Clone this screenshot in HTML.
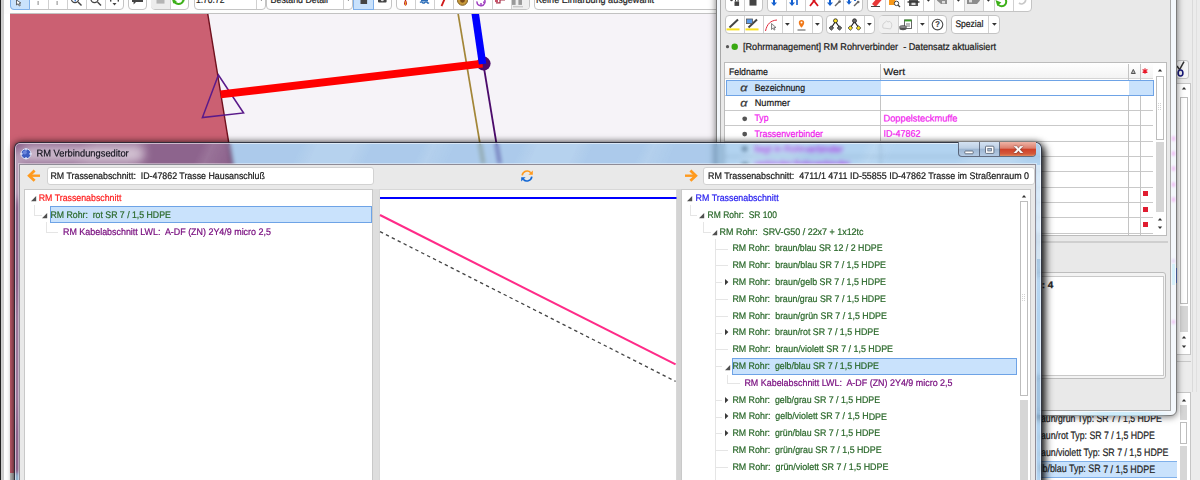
<!DOCTYPE html>
<html lang="de"><head><meta charset="utf-8"><title>RM Verbindungseditor</title>
<style>
html,body{margin:0;padding:0;background:#fff;}
#root{position:relative;width:1200px;height:480px;overflow:hidden;background:#fff;font-family:"Liberation Sans",sans-serif;}
.b{position:absolute;box-sizing:border-box;}
.t{position:absolute;left:0;top:0;white-space:pre;transform-origin:0 50%;-webkit-text-stroke:.22px currentColor;}
svg{position:absolute;overflow:visible;}
.g{position:absolute;box-sizing:border-box;background:#fff;border:1px solid #c4c4c4;border-radius:4px;}
.s{position:absolute;top:0;bottom:0;width:1px;background:#d0d0d0;}

</style></head><body>
<div id="root">
<div class="b" style="left:0px;top:0px;width:1px;height:480px;background:#222"></div>
<div class="b" style="left:1px;top:0px;width:2.5px;height:480px;background:#cdcdcd"></div>
<div class="b" style="left:3.5px;top:0px;width:714px;height:14px;background:#fdfdfd"></div>
<div class="b" style="left:9.5px;top:13px;width:706px;height:1px;background:#c2c2c2"></div>
<div class="b" style="left:10px;top:14px;width:705.5px;height:461px;background:#f6f3f8;overflow:hidden"></div>
<svg style="overflow:hidden;left:10px;top:14px" width="706" height="461" viewBox="0 1 706 461">
<polygon points="0,0 197.6,0 272.6,460 0,460" fill="#cb6072"/>
<line x1="197.6" y1="0" x2="272.6" y2="460" stroke="#70101e" stroke-width="1.4"/>
<line x1="448" y1="0" x2="473.4" y2="151" stroke="#a38638" stroke-width="1.7"/>
<line x1="474" y1="55" x2="489.8" y2="151" stroke="#4b0a6b" stroke-width="1.8"/>
<circle cx="473.6" cy="50.6" r="7" fill="#4b0a6b"/>
<polygon points="208.4,62 192.4,104.6 233.6,100" fill="none" stroke="#5a1a8a" stroke-width="1.5"/>
<line x1="210.6" y1="81.4" x2="472.5" y2="50.6" stroke="#ff0000" stroke-width="8"/>
<line x1="465" y1="-1" x2="472.6" y2="51" stroke="#0000ff" stroke-width="7.5"/>
</svg>
<div class="b" style="left:10px;top:473px;width:10px;height:7px;background:#c8c8c8"></div>
<div class="g" style="left:9.5px;top:-12px;width:114.5px;height:22px;border-radius:4px"><div class="b" style="left:-1.0px;top:-1px;width:20.0px;height:22px;background:#c9e2fc;border:1px solid #7fb0ea;border-radius:0 0 0 4px;"></div><div class="s" style="left:37.0px"></div><div class="s" style="left:56.0px"></div><div class="s" style="left:75.0px"></div><div class="s" style="left:94.5px"></div></div>
<div class="g" style="left:128px;top:-12px;width:19px;height:22px;border-radius:4px"></div>
<div class="g" style="left:151px;top:-12px;width:38px;height:22px;border-radius:4px"><div class="b" style="left:-1px;top:0;width:19px;height:20px;background:#ececec;border-radius:0 0 0 3px;"></div><div class="s" style="left:18px"></div></div>
<div class="g" style="left:193.5px;top:-12px;width:72.5px;height:22px;border-radius:4px"><div class="s" style="left:61.1px"></div></div>
<div class="g" style="left:266px;top:-12px;width:87px;height:22px;border-radius:4px"><div class="s" style="left:76px"></div></div>
<div class="g" style="left:353px;top:-12px;width:38.5px;height:22px;border-radius:4px"><div class="b" style="left:-1px;top:-1px;width:21px;height:22px;background:#c9e2fc;border:1px solid #7fb0ea;"></div></div>
<div class="g" style="left:396px;top:-12px;width:133.5px;height:22px;border-radius:4px"><div class="b" style="left:114px;top:0;width:17.5px;height:20px;background:#efefef;border-radius:0 0 3px 0"></div><div class="s" style="left:18px"></div><div class="s" style="left:37px"></div><div class="s" style="left:56px"></div><div class="s" style="left:75.5px"></div><div class="s" style="left:95px"></div><div class="s" style="left:114px"></div></div>
<div class="g" style="left:533.75px;top:-12px;width:201.25px;height:22px;border-radius:4px"></div>
<span class="t" style="font-size:10.5px;line-height:14px;color:#222;transform:translate(196px,-7.99px) rotate(.03deg) scaleX(0.810);">1:70.72</span>
<span class="t" style="font-size:10.5px;line-height:14px;color:#222;transform:translate(270.6px,-7.99px) rotate(.03deg) scaleX(0.840);">Bestand Detail</span>
<span class="t" style="font-size:10.5px;line-height:14px;color:#222;transform:translate(536px,-7.99px) rotate(.03deg) scaleX(0.864);">Keine Einfärbung ausgewählt</span>
<svg style="left:258.6px;top:-2.4px" width="4.8" height="2.8" viewBox="0 0 4.8 2.8"><path d="M0 0H4.8L2.4 2.8Z" fill="#333"/></svg>
<svg style="left:346.1px;top:-2.4px" width="4.8" height="2.8" viewBox="0 0 4.8 2.8"><path d="M0 0H4.8L2.4 2.8Z" fill="#333"/></svg>
<svg style="left:0px;top:0px" width="540" height="10" viewBox="0 0 540 10">
<path d="M16.5 0l0 5 1.5-1.2 1.3 2.2 1-.6-1.2-2.2 1.8-.2z" fill="#fff" stroke="#444" stroke-width=".8"/>
<rect x="37.6" y="1" width="1" height="4" fill="#888"/><rect x="56.6" y="1" width="1" height="4" fill="#888"/>
<circle cx="75" cy="-1" r="3.6" fill="none" stroke="#444" stroke-width="1.2"/><line x1="78" y1="2" x2="81.5" y2="5.5" stroke="#444" stroke-width="1.4"/>
<rect x="74.6" y="-1" width="1.2" height="2.4" fill="#1560d0"/>
<circle cx="94.5" cy="-1" r="3.6" fill="none" stroke="#444" stroke-width="1.2"/><line x1="97.5" y1="2" x2="101" y2="5.5" stroke="#444" stroke-width="1.4"/>
<path d="M112.5 3h4l-2 2.6z" fill="#444"/><rect x="110" y="0" width="1.4" height="1.6" fill="#444"/><rect x="117.6" y="0" width="1.4" height="1.6" fill="#444"/>
<path d="M132 -2h11v4h-7l-2.4 2.4v-2.4h-1.6z" fill="#444"/>
<rect x="156.5" y="-2" width="8" height="5.6" fill="#b4b4b4"/>
<path d="M173.6 0.5a5.2 5.2 0 0 0 9.6 .6" fill="none" stroke="#3cb018" stroke-width="2"/><path d="M172 -1l1.2 4.6 3.8-2.4z" fill="#3cb018"/><path d="M185.4 -2.2l-1.4 4.2-3.2-2.6z" fill="#3cb018"/>
<rect x="360.5" y="-2" width="6.6" height="6" fill="#444"/>
<rect x="378" y="-2" width="8.6" height="4.4" rx="1" fill="#444"/><circle cx="382.3" cy="-0.2" r="1.5" fill="#ddd"/>
<g transform="translate(0,1.3)"><path d="M405.5 -2c-2 3-1.6 6.2 0 6.400c1.600-.2 2-3.400 0-6.400z" fill="#c01818"/><path d="M405.500 0v4" stroke="#e8a020" stroke-width="1"/>
<path d="M420 1.200q1.200-1.400 2.400 0t2.400 0 2.400 0 1.600 0" fill="none" stroke="#2a6cb8" stroke-width="1.300"/><rect x="421" y="-2" width="7" height="2.200" fill="#2a6cb8"/>
<path d="M441.500 4.800l3-6.800" stroke="#d01818" stroke-width="1.800"/>
<circle cx="462.500" cy="-1" r="5" fill="#c89a3a" stroke="#7a5a20" stroke-width="1"/><circle cx="462.500" cy="-1" r="2.400" fill="#7a4a18"/>
<path d="M477 0a4 4 0 1 0 6-3" fill="none" stroke="#a040c0" stroke-width="1.400"/><circle cx="484" cy="1" r="1" fill="#a040c0"/><circle cx="481" cy="2.600" r="1" fill="#a040c0"/>
<path d="M496 1.500h4v-3h5" fill="none" stroke="#a83048" stroke-width="1.200"/><rect x="495" y="-1.600" width="3" height="2.400" fill="#c85068"/>
<rect x="512" y="-3" width="3.600" height="6.600" fill="#9a9a9a"/><rect x="518.400" y="-3" width="3.600" height="6.600" fill="#9a9a9a"/><path d="M513 5.500h10" stroke="#bbb" stroke-width="1"/>
</g>
</svg>
<div class="b" style="left:1171px;top:0px;width:29px;height:480px;background:#ececec"></div>
<div class="b" style="left:1176px;top:59.5px;width:12.5px;height:19px;border:1px solid #c2c2c2;border-radius:3px;background:#f6f6f6"></div>
<svg style="left:1176px;top:60px" width="12" height="18" viewBox="0 0 12 18"><path d="M1 6l2.600 3.600 4.400-8" fill="none" stroke="#333" stroke-width="1.500"/><ellipse cx="4.500" cy="13" rx="2.400" ry="3" fill="none" stroke="#1a1a7a" stroke-width="1.600"/></svg>
<div class="b" style="left:1176px;top:83px;width:14.5px;height:271.5px;border:1px solid #c6c6c6;background:#fff"></div>
<div class="b" style="left:1180px;top:96.5px;width:7.5px;height:207px;border:1px solid #bdbdbd;background:#fff"></div>
<div class="b" style="left:1180px;top:306px;width:7.5px;height:26px;background:#d6d6d6"></div>
<svg style="left:1181px;top:86px" width="6" height="4" viewBox="0 0 6 4"><path d="M0.8 3.4L3 1L5.2 3.4Z" fill="#333"/></svg>
<svg style="left:1180.6px;top:335px" width="6" height="4" viewBox="0 0 6 4"><path d="M0.8 3.4L3 1L5.2 3.4Z" fill="#333"/></svg>
<svg style="left:1180.6px;top:345px" width="6" height="4" viewBox="0 0 6 4"><path d="M0.8 0.6L3 3L5.2 0.6Z" fill="#333"/></svg>
<div class="b" style="left:1176px;top:361px;width:15px;height:1px;background:#c8c8c8"></div>
<div class="b" style="left:1192px;top:0px;width:1px;height:392px;background:#dadada"></div>
<div class="b" style="left:1196px;top:0px;width:1px;height:392px;background:#e0e0e0"></div>
<div class="b" style="left:1030px;top:392px;width:161px;height:100px;background:#fff;border:1px solid #c6c6c6"></div>
<div class="b" style="left:1040px;top:460.75px;width:137px;height:17.2px;background:#c9e2fc;border-top:1px solid #7fb0ea;border-bottom:1px solid #7fb0ea"></div>
<span class="t" style="font-size:10.8px;line-height:14px;color:#222;transform:translate(1041px,411.02px) rotate(.03deg) scaleX(0.806);">aun/grün Typ: SR 7 / 1,5 HDPE</span>
<span class="t" style="font-size:10.8px;line-height:14px;color:#222;transform:translate(1041px,428.22px) rotate(.03deg) scaleX(0.809);">aun/rot Typ: SR 7 / 1,5 HDPE</span>
<span class="t" style="font-size:10.8px;line-height:14px;color:#222;transform:translate(1041px,444.82px) rotate(.03deg) scaleX(0.815);">aun/violett Typ: SR 7 / 1,5 HDPE</span>
<span class="t" style="font-size:10.8px;line-height:14px;color:#222;transform:translate(1040.5px,461.47px) rotate(.03deg) scaleX(0.824);">lb/blau Typ: SR 7 / 1,5 HDPE</span>
<svg style="left:1180.5px;top:398px" width="6" height="4" viewBox="0 0 6 4"><path d="M0.8 3.4L3 1L5.2 3.4Z" fill="#333"/></svg>
<div class="b" style="left:1180px;top:405px;width:7px;height:14.5px;background:#d6d6d6"></div>
<div class="b" style="left:1180px;top:422px;width:7px;height:21.5px;border:1px solid #bdbdbd;background:#fff"></div>
<div class="b" style="left:1180px;top:446px;width:7px;height:34px;background:#d6d6d6"></div>
<div class="b" style="left:715.5px;top:-12px;width:461px;height:428.2px;background:#f4f8fc;border:1px solid #7d7d7d;border-radius:6px;box-shadow:0 1px 7px 0 rgba(0,0,0,.55)"></div>
<div class="b" style="left:720px;top:-12px;width:451px;height:422.9px;background:#e9e9e9;border:1px solid #a8a8a8;border-top:0"></div>
<div class="b" style="left:1060px;top:411.5px;width:110px;height:4px;background:linear-gradient(90deg,rgba(190,232,250,0),rgba(190,232,250,.7) 40%,rgba(190,232,250,.7) 75%,rgba(190,232,250,0));filter:blur(.6px)"></div>
<div class="g" style="left:724.5px;top:-10px;width:38.5px;height:21.5px;border-radius:4px"><div class="s" style="left:18.0px"></div></div>
<div class="g" style="left:766.7px;top:-10px;width:96.0px;height:21.5px;border-radius:4px"><div class="s" style="left:18.3px"></div><div class="s" style="left:37.3px"></div><div class="s" style="left:56.3px"></div><div class="s" style="left:75.3px"></div></div>
<div class="g" style="left:866.5px;top:-10px;width:165.5px;height:21.5px;border-radius:4px"><div class="b" style="left:66.5px;top:0;width:19px;height:19.5px;background:#f0f0f0"></div><div class="b" style="left:96.5px;top:0;width:19px;height:19.5px;background:#f0f0f0"></div><div class="s" style="left:17.5px"></div><div class="s" style="left:36.5px"></div><div class="s" style="left:55.5px"></div><div class="s" style="left:66.5px"></div><div class="s" style="left:85.5px"></div><div class="s" style="left:96.5px"></div><div class="s" style="left:115.5px"></div><div class="s" style="left:126.5px"></div><div class="s" style="left:145.5px"></div></div>
<div class="g" style="left:724.5px;top:14.5px;width:98.0px;height:19.9px;border-radius:4px"><div class="s" style="left:18.0px"></div><div class="s" style="left:37.0px"></div><div class="s" style="left:56.0px"></div><div class="s" style="left:67.0px"></div><div class="s" style="left:86.0px"></div></div>
<div class="g" style="left:826px;top:14.5px;width:49px;height:19.9px;border-radius:4px"><div class="s" style="left:18px"></div><div class="s" style="left:37px"></div></div>
<div class="g" style="left:879px;top:14.5px;width:68px;height:19.9px;border-radius:4px"><div class="b" style="left:-1px;top:0;width:19px;height:17.9px;background:#f0f0f0;border-radius:3px 0 0 3px;"></div><div class="s" style="left:18px"></div><div class="s" style="left:37px"></div><div class="s" style="left:48px"></div></div>
<div class="g" style="left:951px;top:14.5px;width:49px;height:19.9px;border-radius:4px"><div class="s" style="left:36px"></div></div>
<span class="t" style="font-size:9.6px;line-height:12px;color:#222;transform:translate(955.4px,18.30px) rotate(.03deg) scaleX(0.887);">Spezial</span>
<svg style="left:784.6px;top:23.1px" width="4.8" height="2.8" viewBox="0 0 4.8 2.8"><path d="M0 0H4.8L2.4 2.8Z" fill="#333"/></svg>
<svg style="left:814.6px;top:23.1px" width="4.8" height="2.8" viewBox="0 0 4.8 2.8"><path d="M0 0H4.8L2.4 2.8Z" fill="#333"/></svg>
<svg style="left:867.3000000000001px;top:23.1px" width="4.8" height="2.8" viewBox="0 0 4.8 2.8"><path d="M0 0H4.8L2.4 2.8Z" fill="#333"/></svg>
<svg style="left:920.2px;top:23.1px" width="4.8" height="2.8" viewBox="0 0 4.8 2.8"><path d="M0 0H4.8L2.4 2.8Z" fill="#333"/></svg>
<svg style="left:991.6px;top:23.1px" width="4.8" height="2.8" viewBox="0 0 4.8 2.8"><path d="M0 0H4.8L2.4 2.8Z" fill="#333"/></svg>
<svg style="left:926.1px;top:-1.2px" width="4.8" height="2.8" viewBox="0 0 4.8 2.8"><path d="M0 0H4.8L2.4 2.8Z" fill="#333"/></svg>
<svg style="left:956.1px;top:-1.2px" width="4.8" height="2.8" viewBox="0 0 4.8 2.8"><path d="M0 0H4.8L2.4 2.8Z" fill="#333"/></svg>
<svg style="left:986.1px;top:-1.2px" width="4.8" height="2.8" viewBox="0 0 4.8 2.8"><path d="M0 0H4.8L2.4 2.8Z" fill="#333"/></svg>
<svg style="left:716px;top:0px" width="330" height="12" viewBox="0 0 330 12">
<rect x="18.500" y="1.500" width="4.600" height="4.400" fill="#444"/><path d="M19.500 1.500v-2a1.300 1.300 0 0 1 2.600 0v2" fill="none" stroke="#444" stroke-width="1"/><circle cx="15.500" cy="0" r="1.300" fill="#444"/>
<rect x="33.500" y="0" width="7" height="5.600" fill="#444"/>
<path d="M58 -3v7" stroke="#1460d0" stroke-width="2"/><path d="M55 2.500h6l-3 3.500z" fill="#1460d0"/>
<path d="M76 -3v7" stroke="#1460d0" stroke-width="2"/><path d="M73 2.500h6l-3 3.500z" fill="#1460d0"/><path d="M81 5v-6h3" fill="none" stroke="#1460d0" stroke-width="1.600"/>
<path d="M94 6l7-9M102 6l-7-9" stroke="#d8141c" stroke-width="1.800" fill="none"/>
<path d="M114 -3v7" stroke="#1460d0" stroke-width="2"/><path d="M111 2.500h6l-3 3.500z" fill="#1460d0"/><path d="M119 6l4-4" stroke="#666" stroke-width="1.400"/><circle cx="123.600" cy="1.600" r="1.300" fill="#666"/>
<path d="M133 -3v6" stroke="#1460d0" stroke-width="2"/><path d="M130.200 1.500h5.600l-2.800 3.300z" fill="#1460d0"/><path d="M139 -3v4" stroke="#1460d0" stroke-width="1.800"/><path d="M138 6l4-4" stroke="#666" stroke-width="1.400"/><circle cx="142.200" cy="2" r="1.300" fill="#666"/>
<path d="M156 4l6-7 3.600 3-6 7z" fill="#e83838"/><path d="M155 6.500h9" stroke="#444" stroke-width="1"/>
<rect x="173" y="-2" width="6.500" height="7" fill="#f89818"/><circle cx="180.500" cy="3.400" r="2.200" fill="#fff" stroke="#444" stroke-width="1"/><path d="M182 5l2 2" stroke="#444" stroke-width="1.200"/>
<rect x="193" y="-3" width="9" height="9" fill="#555"/><rect x="195.500" y="2" width="4" height="3" fill="#ddd"/><path d="M191.500 2h12" stroke="#333" stroke-width="1.400"/>
<path d="M221 -3h10v7h-6l-4-3.500z" fill="#8c8c8c"/><rect x="226" y="1" width="3" height="2.400" fill="#ddd"/>
<path d="M251 -3h10l3 3.500-3 3.500h-10z" fill="#8c8c8c"/><rect x="253" y="0" width="3" height="2.400" fill="#ddd"/>
<path d="M282 4.500a4.600 4.600 0 1 0 5.600-7" fill="none" stroke="#3cb018" stroke-width="2"/><path d="M279.500 0l1.800 6 4-3.600z" fill="#3cb018"/>
<path d="M303 3a4 4 0 0 0 5-6.500" fill="none" stroke="#c8c8c8" stroke-width="1.800"/>
</svg>
<svg style="left:716px;top:15.7px" width="330" height="19" viewBox="0 0 330 19">
<path d="M13.500 11.500l8.500-8" stroke="#444" stroke-width="2"/><rect x="10.500" y="12.400" width="13" height="2" fill="#f8e020"/>
<path d="M32.500 11.500l8.500-8" stroke="#444" stroke-width="2"/><rect x="29.500" y="12.400" width="13" height="2" fill="#f8e020"/><rect x="30.500" y="3" width="6" height="4.600" fill="#5a9ae8" stroke="#555" stroke-width=".8"/>
<path d="M49.500 15c1.500-7 5-10.500 11.500-11" fill="none" stroke="#e02838" stroke-width="1"/><path d="M55.500 7.500v6l1.600-1.400 1 2 .9-.5-1-1.900 2-.2z" fill="#eee" stroke="#555" stroke-width=".7"/>
<path d="M85.500 4a2.700 2.700 0 0 1 2.700 2.700c0 2-2.700 5-2.700 5s-2.700-3-2.700-5a2.700 2.700 0 0 1 2.700-2.700z" fill="#f07818"/><circle cx="85.500" cy="6.600" r="1" fill="#fff"/><path d="M81.500 14h8" stroke="#555" stroke-width="1"/>
<path d="M119.500 5.500l-4 6M119.500 5.500l4 6" stroke="#222" stroke-width="1.200"/><circle cx="119.500" cy="4.800" r="2" fill="#f8e020" stroke="#222" stroke-width=".8"/><rect x="113.800" y="10.400" width="3.200" height="3.200" transform="rotate(45 115.400 12)" fill="#666" stroke="#222" stroke-width=".7"/><rect x="121.900" y="10.400" width="3.200" height="3.200" transform="rotate(45 123.500 12)" fill="#666" stroke="#222" stroke-width=".7"/>
<path d="M138.500 5.500l-4 6M138.500 5.500l4 6" stroke="#222" stroke-width="1.200"/><circle cx="138.500" cy="4.800" r="2" fill="#666" stroke="#222" stroke-width=".8"/><rect x="132.800" y="10.400" width="3.200" height="3.200" transform="rotate(45 134.400 12)" fill="#f8e020" stroke="#222" stroke-width=".7"/><rect x="140.900" y="10.400" width="3.200" height="3.200" transform="rotate(45 142.500 12)" fill="#f8e020" stroke="#222" stroke-width=".7"/>
<path d="M167 12c-1-3 .5-5 2-5.600l1.500-1.400 1.500 1 1.800-.6 1.400 1.500c1 1.600.6 4.300-.7 6z" fill="#f1f1f1" stroke="#d2d2d2" stroke-width="1"/>
<rect x="188.500" y="4" width="7" height="8.500" fill="#fff" stroke="#555" stroke-width=".9"/><rect x="188.500" y="3.600" width="7" height="1.800" fill="#3a9a28"/><path d="M190 8h4M190 10h4" stroke="#555" stroke-width=".8"/><ellipse cx="187" cy="12.600" rx="3.600" ry="1.600" fill="#555"/><ellipse cx="187" cy="11" rx="3.600" ry="1.600" fill="#888" stroke="#333" stroke-width=".5"/>
<circle cx="221.500" cy="8.600" r="5.300" fill="#fff" stroke="#4a4a4a" stroke-width="1.1"/>
</svg>
<span class="t" style="font-size:8.5px;line-height:11px;color:#4a4a4a;font-weight:bold;transform:translate(935.3px,19.22px) rotate(.03deg) scaleX(0.884);">?</span>
<svg style="left:716px;top:40px" width="30" height="14" viewBox="0 0 30 14"><circle cx="11.500" cy="6.700" r="1.600" fill="#555"/><circle cx="18.700" cy="6.700" r="3.200" fill="#38a810"/></svg>
<span class="t" style="font-size:9.8px;line-height:13px;color:#1a1a1a;transform:translate(743px,39.87px) rotate(.03deg) scaleX(0.931);">[Rohrmanagement] RM Rohrverbinder  - Datensatz aktualisiert</span>
<div class="b" style="left:724px;top:61.8px;width:443px;height:174.2px;background:#fff;border:1px solid #bcbcbc"></div>
<div class="b" style="left:725px;top:62.8px;width:428px;height:16.2px;background:linear-gradient(#ffffff,#f3f3f3);border-bottom:1px solid #d5d5d5"></div>
<span class="t" style="font-size:9.6px;line-height:12px;color:#1a1a1a;transform:translate(729px,65.90px) rotate(.03deg) scaleX(0.909);">Feldname</span>
<span class="t" style="font-size:9.6px;line-height:12px;color:#1a1a1a;transform:translate(883.5px,65.90px) rotate(.03deg) scaleX(1.071);">Wert</span>
<div class="b" style="left:725px;top:94.53px;width:428px;height:1px;background:#c9c9c9"></div>
<div class="b" style="left:725px;top:109.86px;width:428px;height:1px;background:#c9c9c9"></div>
<div class="b" style="left:725px;top:125.19px;width:428px;height:1px;background:#c9c9c9"></div>
<div class="b" style="left:725px;top:140.52px;width:428px;height:1px;background:#c9c9c9"></div>
<div class="b" style="left:725px;top:155.85px;width:428px;height:1px;background:#c9c9c9"></div>
<div class="b" style="left:725px;top:171.18px;width:428px;height:1px;background:#c9c9c9"></div>
<div class="b" style="left:725px;top:186.51px;width:428px;height:1px;background:#c9c9c9"></div>
<div class="b" style="left:725px;top:201.84px;width:428px;height:1px;background:#c9c9c9"></div>
<div class="b" style="left:725px;top:217.17px;width:428px;height:1px;background:#c9c9c9"></div>
<div class="b" style="left:725px;top:232.5px;width:428px;height:1px;background:#c9c9c9"></div>
<div class="b" style="left:880.0px;top:63.5px;width:1px;height:171.5px;background:#c4c4c4"></div>
<div class="b" style="left:1128.0px;top:63.5px;width:1px;height:171.5px;background:#c4c4c4"></div>
<div class="b" style="left:1140.0px;top:63.5px;width:1px;height:171.5px;background:#c4c4c4"></div>
<div class="b" style="left:725.5px;top:79.5px;width:428px;height:16px;background:#c9e2fc;border:1px solid #6ea3e6"></div>
<div class="b" style="left:881px;top:80.5px;width:247.5px;height:14px;background:#fff"></div>
<span class="t" style="font-size:10.5px;line-height:14px;color:#333;transform:translate(740.3px,80.21px) rotate(.03deg) scaleX(1.200);font-style:italic;">α</span>
<span class="t" style="font-size:9.6px;line-height:12px;color:#1a1a1a;transform:translate(754.7px,81.70px) rotate(.03deg) scaleX(0.907);">Bezeichnung</span>
<span class="t" style="font-size:10.5px;line-height:14px;color:#333;transform:translate(740.3px,95.51px) rotate(.03deg) scaleX(1.200);font-style:italic;">α</span>
<span class="t" style="font-size:9.6px;line-height:12px;color:#1a1a1a;transform:translate(754.7px,97.00px) rotate(.03deg) scaleX(0.960);">Nummer</span>
<svg style="left:742px;top:110.5px" width="8" height="32" viewBox="0 0 8 32"><circle cx="2.700" cy="7.800" r="2.400" fill="#555"/><circle cx="2.700" cy="23.100" r="2.400" fill="#555"/></svg>
<span class="t" style="font-size:9.6px;line-height:12px;color:#f31cf0;transform:translate(754.5px,112.40px) rotate(.03deg) scaleX(0.905);">Typ</span>
<span class="t" style="font-size:9.6px;line-height:12px;color:#f31cf0;transform:translate(754.5px,127.70px) rotate(.03deg) scaleX(0.922);">Trassenverbinder</span>
<span class="t" style="font-size:9.6px;line-height:12px;color:#f31cf0;transform:translate(883.5px,112.40px) rotate(.03deg) scaleX(0.966);">Doppelsteckmuffe</span>
<span class="t" style="font-size:9.6px;line-height:12px;color:#f31cf0;transform:translate(883.5px,127.70px) rotate(.03deg) scaleX(0.937);">ID-47862</span>
<span class="t" style="font-size:9.6px;line-height:12px;color:#f31cf0;transform:translate(754.5px,143.10px) rotate(.03deg) scaleX(0.971);">liegt in Rohrverbinder</span>
<span class="t" style="font-size:9.6px;line-height:12px;color:#f31cf0;transform:translate(754.5px,158.40px) rotate(.03deg) scaleX(0.928);">verbindet Rohrverbinder</span>
<svg style="left:742px;top:141.2px" width="12" height="32" viewBox="0 0 12 32"><circle cx="2.700" cy="7.800" r="2.400" fill="#555"/><rect x="0" y="22" width="6" height="3" fill="#555"/></svg>
<svg style="left:1131px;top:68.5px" width="5" height="5" viewBox="0 0 5 5"><path d="M2.300 .4L4.300 4.500H.3Z" fill="#bbb" stroke="#444" stroke-width=".9"/></svg>
<svg style="left:1142.3px;top:67.8px" width="6" height="6" viewBox="0 0 6 6"><path d="M3 .2v5.600M.6 1.500l4.800 3M.6 4.500l4.800-3" stroke="#e81828" stroke-width="1.100"/></svg>
<div class="b" style="left:1143.3px;top:191.38px;width:5px;height:5px;background:#e01c30"></div>
<div class="b" style="left:1143.3px;top:206.7px;width:5px;height:5px;background:#e01c30"></div>
<div class="b" style="left:1143.3px;top:222.03px;width:5px;height:5px;background:#e01c30"></div>
<svg style="left:1157px;top:67.5px" width="6" height="4" viewBox="0 0 6 4"><path d="M0.8 3.4L3 1L5.2 3.4Z" fill="#333"/></svg>
<div class="b" style="left:1156px;top:75.5px;width:7.5px;height:64px;border:1px solid #bdbdbd;background:#fff"></div>
<svg style="left:1157.5px;top:103px" width="5" height="9" viewBox="0 0 5 9"><path d="M0 .5h4M0 2.500h4M0 4.500h4M0 6.500h4" stroke="#c8c8c8" stroke-width=".8" stroke-dasharray="1 1"/></svg>
<div class="b" style="left:1156px;top:142px;width:7.5px;height:70px;background:#d6d6d6"></div>
<svg style="left:1157px;top:216.5px" width="6" height="4" viewBox="0 0 6 4"><path d="M0.8 3.4L3 1L5.2 3.4Z" fill="#333"/></svg>
<svg style="left:1157px;top:226px" width="6" height="4" viewBox="0 0 6 4"><path d="M0.8 0.6L3 3L5.2 0.6Z" fill="#333"/></svg>
<div class="b" style="left:721px;top:241px;width:447px;height:1.5px;background:#cfcfcf"></div>
<div class="b" style="left:724px;top:271.5px;width:442px;height:107.5px;border:1px solid #bdbdbd;border-radius:3px;background:#f3f3f3"></div>
<div class="b" style="left:728px;top:275.5px;width:435.5px;height:100px;border:1px solid #c9c9c9;background:#fff"></div>
<span class="t" style="font-size:10px;line-height:13px;color:#222;font-weight:bold;transform:translate(1041.7px,278.24px) rotate(.03deg) scaleX(0.994);">: 4</span>
<div class="b" style="left:14px;top:141.8px;width:1027.5px;height:360px;border-radius:6px 6px 0 0;box-shadow:3px 4px 9px 0 rgba(0,0,0,.85),0 0 7px 0 rgba(0,0,0,.6)"></div>
<div class="b" style="left:14px;top:141.8px;width:1027.5px;height:360px;border-radius:6px 6px 0 0;border:1px solid rgba(30,30,40,.85);backdrop-filter:blur(2.2px);-webkit-backdrop-filter:blur(2.2px);background:repeating-linear-gradient(115deg,rgba(255,255,255,0) 0,rgba(255,255,255,0) 60px,rgba(255,255,255,.13) 75px,rgba(255,255,255,.13) 110px,rgba(255,255,255,0) 125px,rgba(255,255,255,0) 170px,rgba(255,255,255,.1) 180px,rgba(255,255,255,0) 200px),rgba(0,108,206,.30);box-shadow:inset 0 0 0 1px rgba(255,255,255,.55)"></div>
<div class="b" style="left:15px;top:142.8px;width:1025.5px;height:340px;border-radius:5px 5px 0 0;overflow:hidden"><div class="b" style="left:6px;top:3px;width:124px;height:16px;background:rgba(255,255,255,.55);border-radius:8px;filter:blur(5px)"></div><div class="b" style="left:-8px;top:8px;width:16px;height:50px;background:rgba(255,255,255,.4);border-radius:8px;filter:blur(5px)"></div></div>
<svg style="left:20px;top:148px" width="12" height="12" viewBox="0 0 12 12"><circle cx="6" cy="5.800" r="5" fill="#3c5cc0" stroke="#dfe4f2" stroke-width="1"/><path d="M6 .3v2.200M6 9.100v2.200M.5 5.800h2.200M9.300 5.800h2.200" stroke="#eef" stroke-width="1.200"/><circle cx="4.800" cy="4.600" r="2" fill="#6a86dc"/></svg>
<span class="t" style="font-size:9.8px;line-height:13px;color:#14141e;transform:translate(36.5px,146.57px) rotate(.03deg) scaleX(0.951);">RM Verbindungseditor</span>
<div class="b" style="left:957.8px;top:141.8px;width:78px;height:15.2px;border-radius:0 0 4px 4px;border:1px solid rgba(60,70,90,.75);border-top:0;overflow:hidden;background:linear-gradient(#d4e2f2 0,#bccfe4 45%,#9db6d2 50%,#b4cbe4 100%)"></div>
<div class="b" style="left:999.5px;top:141.8px;width:36.3px;height:14.7px;border-radius:0 0 4px 0;background:linear-gradient(#eeb4a6 0,#dc7e6c 45%,#cf4028 50%,#d45a3c 85%,#e08a5c 100%)"></div>
<div class="b" style="left:979px;top:141.8px;width:1px;height:14.5px;background:rgba(60,70,90,.7)"></div>
<div class="b" style="left:999px;top:141.8px;width:1px;height:14.5px;background:rgba(60,70,90,.7)"></div>
<svg style="left:958px;top:143px" width="78" height="15" viewBox="0 0 78 15">
<rect x="6.800" y="8" width="8.400" height="2.800" rx=".8" fill="#fff" stroke="#5a6678" stroke-width=".9"/>
<rect x="27.500" y="3.200" width="8.400" height="7.200" rx=".8" fill="#fff" stroke="#5a6678" stroke-width=".9"/><rect x="29.800" y="5.400" width="3.800" height="2.600" fill="#a8bcd4" stroke="#5a6678" stroke-width=".7"/>
</svg>
<span class="t" style="font-size:13px;line-height:17px;color:#fff;font-weight:bold;transform:translate(1013.8px,140.07px) rotate(.03deg) scaleX(1.299);text-shadow:0 0 1.500px #4a2a2a,0 0 1px #4a2a2a;">x</span>
<div class="b" style="left:1036.5px;top:165px;width:4.2px;height:94px;background:rgba(255,255,255,.5)"></div>
<div class="b" style="left:19px;top:163.8px;width:1017px;height:330px;background:#e9e9e9;border:1px solid rgba(70,64,84,.55);box-shadow:0 0 0 1px rgba(255,255,255,.4)"></div>
<svg style="left:26px;top:169px" width="15" height="13" viewBox="0 0 15 13"><path d="M14 6.700H4.500" fill="none" stroke="#ff9a1e" stroke-width="2.400"/><path d="M8.600 1.600L3.200 6.700L8.600 11.800" fill="none" stroke="#ff9a1e" stroke-width="2.800" stroke-linejoin="miter"/></svg>
<div class="b" style="left:46.8px;top:166.8px;width:327.5px;height:17.8px;background:#fff;border:1px solid #d2d2d2;border-radius:3px"></div>
<span class="t" style="font-size:9.6px;line-height:12px;color:#1a1a1a;transform:translate(50.5px,169.70px) rotate(.03deg) scaleX(0.920);">RM Trassenabschnitt:  ID-47862 Trasse Hausanschluß</span>
<svg style="left:520px;top:169px" width="14" height="14" viewBox="0 0 14 14"><path d="M2.200 6.400a4.900 4.900 0 0 1 8.600-2.600" fill="none" stroke="#ff9a1e" stroke-width="1.650"/><path d="M12.800 1.400v4.400h-4.400z" fill="#ff9a1e"/><path d="M11.800 7.600a4.900 4.900 0 0 1-8.600 2.600" fill="none" stroke="#1468d4" stroke-width="1.650"/><path d="M1.200 12.600v-4.400h4.400z" fill="#1468d4"/></svg>
<svg style="left:684px;top:169px" width="15" height="13" viewBox="0 0 15 13"><path d="M1 6.700H10.500" fill="none" stroke="#ff9a1e" stroke-width="2.400"/><path d="M6.400 1.600L11.800 6.700L6.400 11.800" fill="none" stroke="#ff9a1e" stroke-width="2.800" stroke-linejoin="miter"/></svg>
<div class="b" style="left:702.9px;top:166.8px;width:332.3px;height:17.8px;background:#fff;border:1px solid #d2d2d2;border-radius:3px"></div>
<span class="t" style="font-size:9.6px;line-height:12px;color:#1a1a1a;transform:translate(708px,169.70px) rotate(.03deg) scaleX(0.930);">RM Trassenabschnitt:  4711/1 4711 ID-55855 ID-47862 Trasse im Straßenraum 0</span>
<div class="b" style="left:24px;top:188.6px;width:349px;height:300px;background:#fff;border:1px solid #c9c9c9"></div>
<div class="b" style="left:373px;top:188.6px;width:5.6px;height:300px;background:#dedede"></div>
<div class="b" style="left:378.6px;top:189px;width:298.4px;height:300px;background:#fff;border:1px solid #d8d8d8"></div>
<div class="b" style="left:677px;top:188.6px;width:4.5px;height:300px;background:#d4d4d4"></div>
<div class="b" style="left:681px;top:188.6px;width:349.5px;height:300px;background:#fff;border:1px solid #c9c9c9"></div>
<svg style="left:379px;top:189px" width="298" height="292" viewBox="0 0 298 292">
<line x1="1" y1="9" x2="297.500" y2="9" stroke="#0000ff" stroke-width="2"/>
<line x1="1" y1="26" x2="296.600" y2="175.400" stroke="#ff2b88" stroke-width="2"/>
<line x1="1" y1="42.600" x2="296.600" y2="192.400" stroke="#444" stroke-width="1.300" stroke-dasharray="3.400 3.200"/>
</svg>
<svg style="left:30.699999999999996px;top:196.20000000000002px" width="5.2" height="5.2" viewBox="0 0 5.2 5.2"><path d="M5.200 0V5.200H0Z" fill="#505050"/></svg>
<span class="t" style="font-size:9.6px;line-height:12px;color:#ff1c1c;transform:translate(38.7px,191.70px) rotate(.03deg) scaleX(0.917);">RM Trassenabschnitt</span>
<div class="b" style="left:33.5px;top:205px;width:1px;height:10px;background:#e5e5e5"></div>
<div class="b" style="left:33.5px;top:215px;width:8px;height:1px;background:#e5e5e5"></div>
<div class="b" style="left:50px;top:206px;width:322px;height:16.6px;background:#c9e2fc;border:1px solid #6ea3e6"></div>
<svg style="left:42.4px;top:213.20000000000002px" width="5.2" height="5.2" viewBox="0 0 5.2 5.2"><path d="M5.200 0V5.200H0Z" fill="#505050"/></svg>
<span class="t" style="font-size:9.6px;line-height:12px;color:#2a682a;transform:translate(50.5px,208.70px) rotate(.03deg) scaleX(0.910);">RM Rohr:  rot SR 7 / 1,5 HDPE</span>
<div class="b" style="left:45.5px;top:222px;width:1px;height:10px;background:#e5e5e5"></div>
<div class="b" style="left:45.5px;top:231.5px;width:12px;height:1px;background:#e5e5e5"></div>
<span class="t" style="font-size:9.6px;line-height:12px;color:#7a1080;transform:translate(63px,225.70px) rotate(.03deg) scaleX(0.929);">RM Kabelabschnitt LWL:  A-DF (ZN) 2Y4/9 micro 2,5</span>
<svg style="left:687.4px;top:196.4px" width="5.2" height="5.2" viewBox="0 0 5.2 5.2"><path d="M5.200 0V5.200H0Z" fill="#505050"/></svg>
<span class="t" style="font-size:9.6px;line-height:12px;color:#2a22f0;transform:translate(695.6px,191.90px) rotate(.03deg) scaleX(0.921);">RM Trassenabschnitt</span>
<div class="b" style="left:690px;top:205px;width:1px;height:10px;background:#e5e5e5"></div>
<div class="b" style="left:690px;top:215px;width:7px;height:1px;background:#e5e5e5"></div>
<svg style="left:699.4px;top:213.21px" width="5.2" height="5.2" viewBox="0 0 5.2 5.2"><path d="M5.200 0V5.200H0Z" fill="#505050"/></svg>
<span class="t" style="font-size:9.6px;line-height:12px;color:#2a682a;transform:translate(707.6px,208.71px) rotate(.03deg) scaleX(0.885);">RM Rohr:  SR 100</span>
<div class="b" style="left:702.5px;top:222px;width:1px;height:10px;background:#e5e5e5"></div>
<div class="b" style="left:702.5px;top:231.5px;width:8px;height:1px;background:#e5e5e5"></div>
<svg style="left:712.4px;top:230.02px" width="5.2" height="5.2" viewBox="0 0 5.2 5.2"><path d="M5.200 0V5.200H0Z" fill="#505050"/></svg>
<span class="t" style="font-size:9.6px;line-height:12px;color:#2a682a;transform:translate(719.6px,225.52px) rotate(.03deg) scaleX(0.930);">RM Rohr:  SRV-G50 / 22x7 + 1x12tc</span>
<div class="b" style="left:715px;top:238.5px;width:1px;height:250px;background:#e5e5e5"></div>
<div class="b" style="left:732px;top:357.8px;width:284.5px;height:16.9px;background:#c9e2fc;border:1px solid #6ea3e6"></div>
<div class="b" style="left:715px;top:248.53px;width:13px;height:1px;background:#e5e5e5"></div>
<span class="t" style="font-size:9.6px;line-height:12px;color:#2a682a;transform:translate(732.4px,242.33px) rotate(.03deg) scaleX(0.917);">RM Rohr:  braun/blau SR 12 / 2 HDPE</span>
<div class="b" style="left:715px;top:265.34px;width:13px;height:1px;background:#e5e5e5"></div>
<span class="t" style="font-size:9.6px;line-height:12px;color:#2a682a;transform:translate(732.4px,259.14px) rotate(.03deg) scaleX(0.923);">RM Rohr:  braun/blau SR 7 / 1,5 HDPE</span>
<div class="b" style="left:715px;top:282.15px;width:7px;height:1px;background:#e5e5e5"></div>
<svg style="left:724.7px;top:278.95px" width="4" height="7" viewBox="0 0 4 7"><path d="M0 0L3.400 3.100L0 6.200Z" fill="#3a3a3a"/></svg>
<span class="t" style="font-size:9.6px;line-height:12px;color:#2a682a;transform:translate(732.4px,275.95px) rotate(.03deg) scaleX(0.923);">RM Rohr:  braun/gelb SR 7 / 1,5 HDPE</span>
<div class="b" style="left:715px;top:298.96px;width:13px;height:1px;background:#e5e5e5"></div>
<span class="t" style="font-size:9.6px;line-height:12px;color:#2a682a;transform:translate(732.4px,292.76px) rotate(.03deg) scaleX(0.917);">RM Rohr:  braun/grau SR 7 / 1,5 HDPE</span>
<div class="b" style="left:715px;top:315.77px;width:13px;height:1px;background:#e5e5e5"></div>
<span class="t" style="font-size:9.6px;line-height:12px;color:#2a682a;transform:translate(732.4px,309.57px) rotate(.03deg) scaleX(0.923);">RM Rohr:  braun/grün SR 7 / 1,5 HDPE</span>
<div class="b" style="left:715px;top:332.58px;width:7px;height:1px;background:#e5e5e5"></div>
<svg style="left:724.7px;top:329.38px" width="4" height="7" viewBox="0 0 4 7"><path d="M0 0L3.400 3.100L0 6.200Z" fill="#3a3a3a"/></svg>
<span class="t" style="font-size:9.6px;line-height:12px;color:#2a682a;transform:translate(732.4px,326.38px) rotate(.03deg) scaleX(0.920);">RM Rohr:  braun/rot SR 7 / 1,5 HDPE</span>
<div class="b" style="left:715px;top:349.39px;width:13px;height:1px;background:#e5e5e5"></div>
<span class="t" style="font-size:9.6px;line-height:12px;color:#2a682a;transform:translate(732.4px,343.19px) rotate(.03deg) scaleX(0.927);">RM Rohr:  braun/violett SR 7 / 1,5 HDPE</span>
<div class="b" style="left:715px;top:366.2px;width:7px;height:1px;background:#e5e5e5"></div>
<svg style="left:724.6999999999999px;top:364.5px" width="5.2" height="5.2" viewBox="0 0 5.2 5.2"><path d="M5.200 0V5.200H0Z" fill="#505050"/></svg>
<span class="t" style="font-size:9.6px;line-height:12px;color:#2a682a;transform:translate(732.4px,360.00px) rotate(.03deg) scaleX(0.916);">RM Rohr:  gelb/blau SR 7 / 1,5 HDPE</span>
<div class="b" style="left:715px;top:399.82px;width:7px;height:1px;background:#e5e5e5"></div>
<svg style="left:724.7px;top:396.62px" width="4" height="7" viewBox="0 0 4 7"><path d="M0 0L3.400 3.100L0 6.200Z" fill="#3a3a3a"/></svg>
<span class="t" style="font-size:9.6px;line-height:12px;color:#2a682a;transform:translate(732.4px,393.62px) rotate(.03deg) scaleX(0.917);">RM Rohr:  gelb/grau SR 7 / 1,5 HDPE</span>
<div class="b" style="left:715px;top:416.63px;width:7px;height:1px;background:#e5e5e5"></div>
<svg style="left:724.7px;top:413.43px" width="4" height="7" viewBox="0 0 4 7"><path d="M0 0L3.400 3.100L0 6.200Z" fill="#3a3a3a"/></svg>
<span class="t" style="font-size:9.6px;line-height:12px;color:#2a682a;transform:translate(732.4px,410.43px) rotate(.03deg) scaleX(0.926);">RM Rohr:  gelb/violett SR 7 / 1,5 HDPE</span>
<div class="b" style="left:715px;top:433.44px;width:7px;height:1px;background:#e5e5e5"></div>
<svg style="left:724.7px;top:430.24px" width="4" height="7" viewBox="0 0 4 7"><path d="M0 0L3.400 3.100L0 6.200Z" fill="#3a3a3a"/></svg>
<span class="t" style="font-size:9.6px;line-height:12px;color:#2a682a;transform:translate(732.4px,427.24px) rotate(.03deg) scaleX(0.917);">RM Rohr:  grün/blau SR 7 / 1,5 HDPE</span>
<div class="b" style="left:715px;top:450.25px;width:13px;height:1px;background:#e5e5e5"></div>
<span class="t" style="font-size:9.6px;line-height:12px;color:#2a682a;transform:translate(732.4px,444.05px) rotate(.03deg) scaleX(0.920);">RM Rohr:  grün/grau SR 7 / 1,5 HDPE</span>
<div class="b" style="left:715px;top:467.06px;width:13px;height:1px;background:#e5e5e5"></div>
<span class="t" style="font-size:9.6px;line-height:12px;color:#2a682a;transform:translate(732.4px,460.86px) rotate(.03deg) scaleX(0.929);">RM Rohr:  grün/violett SR 7 / 1,5 HDPE</span>
<div class="b" style="left:726.5px;top:374.8px;width:1px;height:8.5px;background:#e5e5e5"></div>
<div class="b" style="left:726.5px;top:383px;width:13.5px;height:1px;background:#e5e5e5"></div>
<span class="t" style="font-size:9.6px;line-height:12px;color:#7a1080;transform:translate(744.4px,376.81px) rotate(.03deg) scaleX(0.930);">RM Kabelabschnitt LWL:  A-DF (ZN) 2Y4/9 micro 2,5</span>
<svg style="left:1020.8px;top:193.5px" width="6" height="4" viewBox="0 0 6 4"><path d="M0.8 3.4L3 1L5.2 3.4Z" fill="#333"/></svg>
<div class="b" style="left:1020px;top:201px;width:7.5px;height:195px;border:1px solid #bdbdbd;background:#fff"></div>
<svg style="left:1021.5px;top:294px" width="5" height="9" viewBox="0 0 5 9"><path d="M0 .5h4M0 2.500h4M0 4.500h4M0 6.500h4" stroke="#c8c8c8" stroke-width=".8" stroke-dasharray="1 1"/></svg>
<div class="b" style="left:1020px;top:399.5px;width:7.5px;height:90px;background:#d6d6d6"></div>
<div class="b" style="left:1171.8px;top:135.5px;width:3.4px;height:5px;background:rgba(236,90,236,.38);border-radius:2px;filter:blur(.8px)"></div>
<div class="b" style="left:1171.8px;top:150.8px;width:3.4px;height:5px;background:rgba(236,90,236,.38);border-radius:2px;filter:blur(.8px)"></div>
<div class="b" style="left:1171.8px;top:166.1px;width:3.4px;height:5px;background:rgba(236,90,236,.38);border-radius:2px;filter:blur(.8px)"></div>
<div class="b" style="left:1171.8px;top:181.8px;width:3.4px;height:5px;background:rgba(236,90,236,.38);border-radius:2px;filter:blur(.8px)"></div>
<div class="b" style="left:1171.8px;top:196.8px;width:3.4px;height:5px;background:rgba(236,90,236,.38);border-radius:2px;filter:blur(.8px)"></div>
<div class="b" style="left:1171.8px;top:259px;width:3.4px;height:4px;background:rgba(200,150,240,.3);filter:blur(.8px)"></div>
<div class="b" style="left:1171.8px;top:319.5px;width:3.4px;height:4.5px;background:rgba(236,90,236,.3);filter:blur(.8px)"></div>
<div class="b" style="left:1171.6px;top:264px;width:3.8px;height:21px;background:rgba(190,235,250,.55);filter:blur(.6px)"></div>
<div class="b" style="left:1175.6px;top:268px;width:1px;height:15px;background:rgba(40,70,150,.7)"></div>
</div>
</body></html>
